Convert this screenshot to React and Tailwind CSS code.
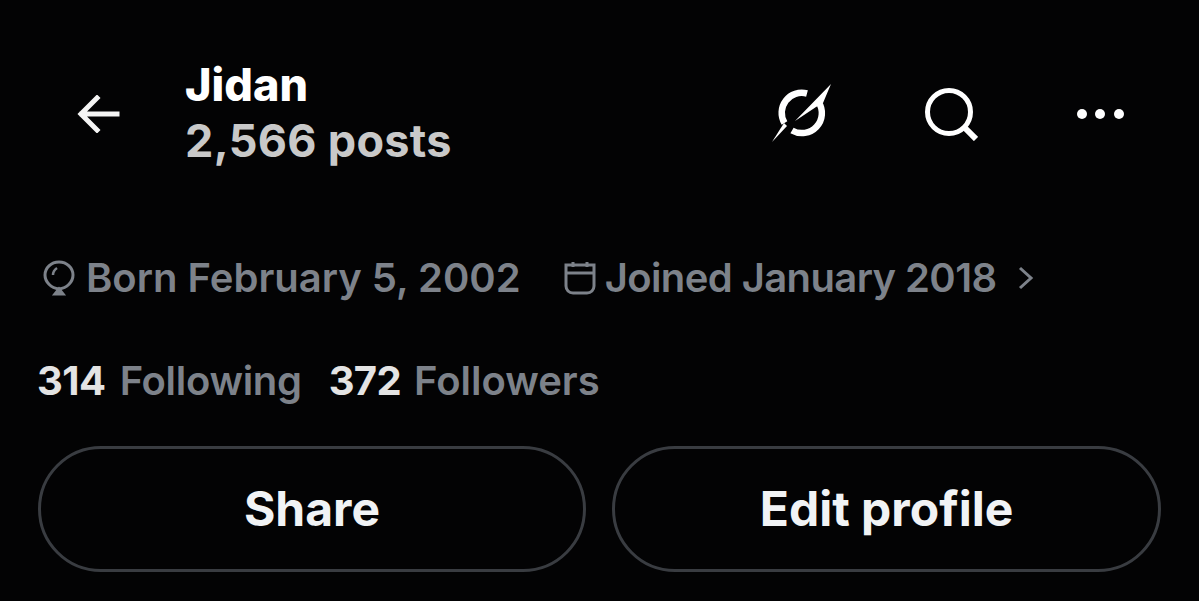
const font = { fontFamily: 'Inter, "Liberation Sans", sans-serif' };

function Arrow() {
  return (
    <svg width="44" height="38" viewBox="0 0 44 38" fill="none" stroke="#f4f4f4" strokeWidth="5" strokeLinecap="square">
      <path d="M40 19H5M20 3L4 19L20 35" />
    </svg>
  );
}

function Grok() {
  return (
    <svg width="62" height="60" viewBox="0 0 62 60" fill="#fff">
      <path d="M36 9.500A20 20 0 0 0 13.500 39" fill="none" stroke="#fff" strokeWidth="6.500" />
      <path d="M21 46.500A20 20 0 0 0 47.500 18" fill="none" stroke="#fff" strokeWidth="6.500" />
      <path d="M60 0L24 37L45 23L49 21L52 19Z" />
      <path d="M1 58L13 39L16 42Z" />
    </svg>
  );
}

function Search() {
  return (
    <svg width="54" height="54" viewBox="0 0 54 54" fill="none" stroke="#fff" strokeWidth="5">
      <circle cx="25" cy="25" r="21.500" />
      <path d="M40 40L52 52" strokeWidth="6" />
    </svg>
  );
}

function Dots() {
  return (
    <svg width="48" height="12" viewBox="0 0 48 12" fill="#fff">
      <circle cx="6" cy="6" r="5" />
      <circle cx="24" cy="6" r="5" />
      <circle cx="43" cy="6" r="5" />
    </svg>
  );
}

function Balloon() {
  return (
    <svg width="32" height="36" viewBox="0 0 32 36" fill="none" stroke="#7d828a" strokeWidth="3">
      <path d="M16 2C8 2 2 8 2 15C2 22 8 28 16 29C24 28 30 22 30 15C30 8 24 2 16 2Z" />
      <path d="M16 29L12 34H20Z" fill="#7d828a" />
      <path d="M10 15C10 12 11 10 14 8" strokeWidth="2.500" />
    </svg>
  );
}

function Calendar() {
  return (
    <svg width="34" height="34" viewBox="0 0 34 34" fill="none" stroke="#7d828a" strokeWidth="3">
      <path d="M3 4H31V25C31 29 28 32 24 32H10C6 32 3 29 3 25Z" />
      <path d="M3 12H31M10 1V6M24 1V6" />
    </svg>
  );
}

function Chevron() {
  return (
    <svg width="16" height="24" viewBox="0 0 16 24" fill="none" stroke="#7d828a" strokeWidth="3">
      <path d="M2 2L13 12L2 22" />
    </svg>
  );
}

export default function App() {
  return (
    <div className="w-[1199px] h-[601px] overflow-hidden bg-[#030304] flex flex-col px-[38px]" style={font}>
      <header className="flex items-center h-[112px] mt-[58px]">
        <div className="w-[147px] pl-[39px] flex items-center">
          <Arrow />
        </div>
        <div className="flex-1 flex flex-col -mt-[2px]">
          <span className="text-[45px] leading-[56px] font-extrabold text-white">Jidan</span>
          <span className="text-[45px] leading-[56px] font-bold text-[#c9c9c9] tracking-[0.3px]">2,566 posts</span>
        </div>
        <div className="flex items-center">
          <Grok />
          <div className="ml-[91px]"><Search /></div>
          <div className="ml-[98px] mr-[37px]"><Dots /></div>
        </div>
      </header>

      <div className="flex items-center mt-[87px] h-[42px] text-[40px] font-semibold text-[#7d828a]">
        <div className="ml-[5px]"><Balloon /></div>
        <span className="ml-[11px]">Born February 5, 2002</span>
        <div className="ml-[42px]"><Calendar /></div>
        <span className="ml-[8px] tracking-[-0.6px]">Joined January 2018</span>
        <div className="ml-[22px]"><Chevron /></div>
      </div>

      <div className="flex items-center mt-[60px] h-[44px] text-[40px] font-semibold">
        <span className="-ml-[1px] font-bold text-[#e4e4e4] tracking-[-0.5px]">314</span>
        <span className="ml-[14px] text-[#7d828a] tracking-[-0.3px]">Following</span>
        <span className="ml-[27px] font-bold text-[#e4e4e4] tracking-[-0.7px]">372</span>
        <span className="ml-[13px] text-[#7d828a]">Followers</span>
      </div>

      <div className="flex gap-[26px] mt-[43px]">
        <button className="w-[548px] h-[126px] rounded-full border-[3px] border-[#393c41] text-[48px] font-bold text-[#f1f3f5]">Share</button>
        <button className="w-[549px] h-[126px] rounded-full border-[3px] border-[#393c41] text-[48px] font-bold text-[#f1f3f5]">Edit profile</button>
      </div>
    </div>
  );
}
